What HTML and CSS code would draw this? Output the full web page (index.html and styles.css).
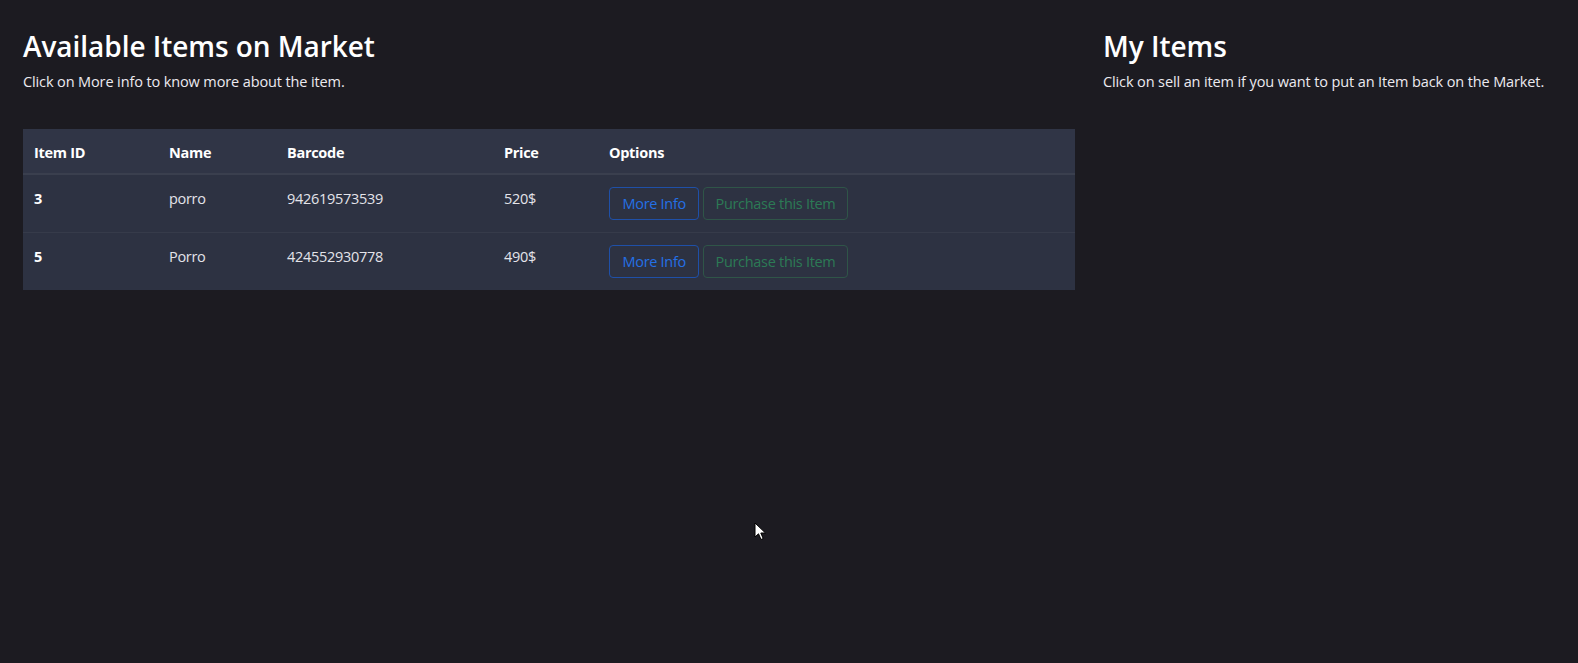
FILE: index.html
```html
<!DOCTYPE html>
<html lang="en">
<head>
<meta charset="utf-8">
<title>Market</title>
<link rel="stylesheet" href="styles.css">
</head>
<body>
<div class="page">
  <section class="market">
    <h2 class="title">Available Items on Market</h2>
    <p class="lead">Click on More info to know more about the item.</p>
    <table class="items">
      <thead>
        <tr>
          <th class="c-id">Item ID</th>
          <th class="c-name">Name</th>
          <th class="c-code">Barcode</th>
          <th class="c-price">Price</th>
          <th>Options</th>
        </tr>
      </thead>
      <tbody>
        <tr>
          <td class="id">3</td>
          <td>porro</td>
          <td>942619573539</td>
          <td>520$</td>
          <td class="opts"><button class="btn btn-info">More Info</button><button class="btn btn-buy">Purchase this Item</button></td>
        </tr>
        <tr>
          <td class="id">5</td>
          <td>Porro</td>
          <td>424552930778</td>
          <td>490$</td>
          <td class="opts"><button class="btn btn-info">More Info</button><button class="btn btn-buy">Purchase this Item</button></td>
        </tr>
      </tbody>
    </table>
  </section>
  <section class="mine">
    <h2 class="title">My Items</h2>
    <p class="lead">Click on sell an item if you want to put an Item back on the Market.</p>
  </section>
</div>
<svg class="cursor" width="14" height="20" viewBox="0 0 14 20"><path d="M1 1 L1 15 L4.5 11.8 L7 17.5 L9.2 16.5 L6.8 11 L11.5 11 Z" fill="#fff" stroke="#000" stroke-width="1"/></svg>
</body>
</html>
```
FILE: styles.css
```css
html, body {
  margin: 0;
  padding: 0;
  background: #1c1b21;
  height: 100%;
}
body {
  font-family: "Open Sans", "Noto Sans", sans-serif;
  color: #f2f2f2;
  position: relative;
  overflow: hidden;
}
.page {
  display: grid;
  grid-template-columns: 1052px 1fr;
  column-gap: 28px;
  padding: 27px 23px 0 23px;
}
.title {
  margin: 0;
  font-size: 28px;
  font-weight: 600;
  line-height: 38px;
  letter-spacing: -0.05px;
  color: #ffffff;
}
.lead {
  margin: 6px 0 0 0;
  font-size: 14.5px;
  line-height: 22px;
  letter-spacing: -0.12px;
  color: #eceaf0;
}
.items {
  margin-top: 36px;
  width: 1052px;
  border-collapse: collapse;
  background: #2d3242;
  font-size: 14.5px;
  letter-spacing: -0.3px;
}
.items th {
  text-align: left;
  font-weight: 700;
  color: #ffffff;
  background: #303546;
  padding: 13px 11px 9px 11px;
  line-height: 22px;
  border-bottom: 2px solid #3a3f4e;
}
.c-id { width: 113px; }
.c-name { width: 96px; }
.c-code { width: 195px; }
.c-price { width: 83px; }
.items td {
  padding: 13px 11px 9px 11px;
  line-height: 22px;
  color: #e4e4ea;
  vertical-align: top;
  border-bottom: 1px solid #363b4a;
}
.items tbody tr:last-child td {
  border-bottom: none;
}
.items td.id {
  font-weight: 700;
  color: #ffffff;
}
.items td.opts {
  padding-top: 12px;
  padding-bottom: 12px;
}
.btn {
  font-family: inherit;
  font-size: 14.5px;
  letter-spacing: -0.3px;
  height: 33px;
  padding: 0 11px;
  background: transparent;
  border-radius: 4px;
  margin-right: 4px;
  cursor: pointer;
  vertical-align: top;
}
.btn-info {
  padding: 0 12.5px;
  border: 1px solid #1f50a8;
  color: #2470e6;
}
.btn-buy {
  border: 1px solid #2f5548;
  color: #2c7a55;
}
.cursor {
  position: absolute;
  left: 754px;
  top: 522px;
}
```
